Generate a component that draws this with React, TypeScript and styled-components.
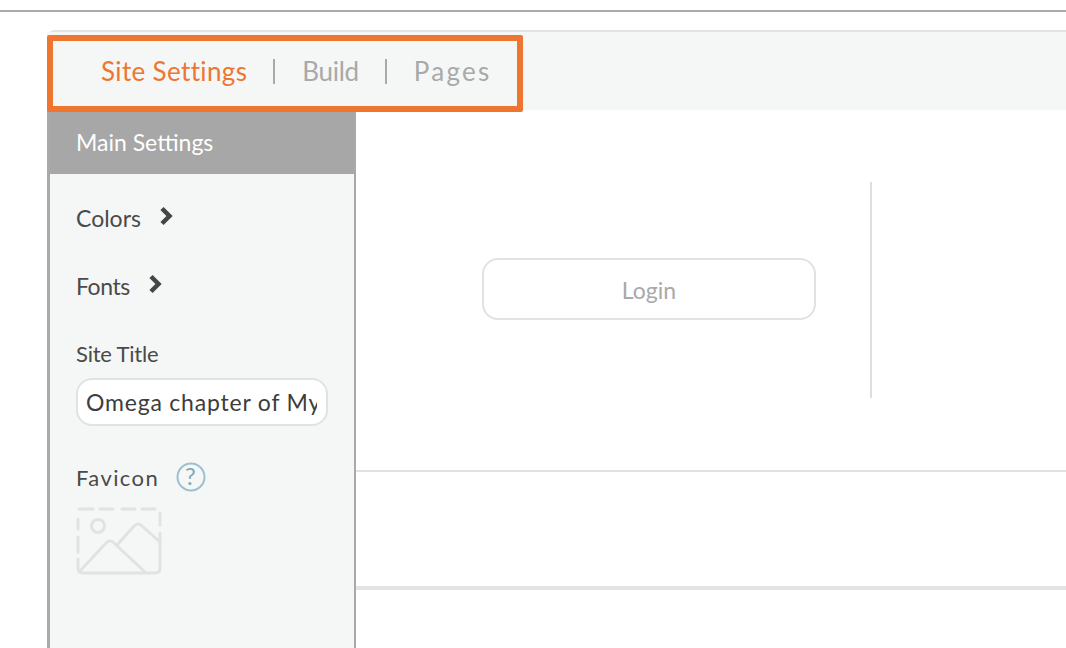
import React from "react";
import styled, { createGlobalStyle } from "styled-components";

const GlobalStyle = createGlobalStyle`
  html, body {
    margin: 0;
    padding: 0;
    height: 648px;
    overflow: hidden;
    background: #fff;
    font-family: "Lato", "Open Sans", sans-serif;
  }
`;

const TopRule = styled.div`
  height: 2px;
  margin-top: 10px;
  background: #a8a9a8;
`;

const Frame = styled.div`
  margin: 18px 0 0 47px;
  border-top: 2px solid #dfe3e2;
  border-top-left-radius: 8px;
`;

const Header = styled.header`
  position: relative;
  height: 78px;
  background: #f5f7f6;
`;

const Highlight = styled.div`
  position: absolute;
  left: 0;
  top: 3px;
  width: 476px;
  height: 77px;
  box-sizing: border-box;
  border: 6px solid #ee7631;
  border-radius: 2px;
`;

const Tabs = styled.nav`
  display: flex;
  align-items: center;
  height: 78px;
  padding: 0 0 0 54px;
  font-size: 26px;
  color: #a8a9a8;
`;

const Tab = styled.span<{ $active?: boolean; $track: number }>`
  color: ${(p) => (p.$active ? "#ee7631" : "#a8a9a8")};
  letter-spacing: ${(p) => p.$track}px;
`;

const Sep = styled.span`
  width: 2px;
  height: 25px;
  margin: 0 27px 0 26px;
  background: #a8a9a8;
`;

const Body = styled.div`
  display: flex;
  height: 540px;
`;

const Sidebar = styled.aside`
  flex: none;
  width: 309px;
  box-sizing: border-box;
  background: #f5f7f6;
  border-left: 3px solid #a8a9a8;
  border-right: 2px solid #a8a9a8;
`;

const SideTitle = styled.div`
  display: flex;
  align-items: center;
  height: 60px;
  margin-top: 2px;
  padding: 0 0 2px 26px;
  background: #a6a7a6;
  color: #fff;
  font-size: 23px;
`;

const SideBody = styled.div`
  padding: 0 0 0 26px;
`;

const MenuRow = styled.div<{ $top: number; $track: number }>`
  display: flex;
  align-items: center;
  gap: 18px;
  height: 30px;
  margin-top: ${(p) => p.$top}px;
  color: #4a4a4a;
  font-size: 23px;
  letter-spacing: ${(p) => p.$track}px;
`;

const Chevron = styled.svg`
  width: 14px;
  height: 20px;
  margin-top: -5px;
`;

const Label = styled.div<{ $top: number; $track: number }>`
  display: flex;
  align-items: center;
  gap: 17px;
  height: 28px;
  margin-top: ${(p) => p.$top}px;
  color: #4a4a4a;
  font-size: 22px;
  letter-spacing: ${(p) => p.$track}px;
`;

const TitleInput = styled.input`
  display: block;
  width: 252px;
  height: 48px;
  margin-top: 11px;
  padding: 0 9px 0 8px;
  box-sizing: border-box;
  background: #fff;
  border: 2px solid #dfe3e2;
  border-radius: 16px;
  outline: none;
  color: #3d3d3d;
  font-family: "Lato", sans-serif;
  font-size: 23px;
  letter-spacing: 0.8px;
`;

const HelpIcon = styled.svg`
  width: 30px;
  height: 30px;
`;

const PlaceholderIcon = styled.svg`
  display: block;
  width: 88px;
  height: 70px;
  margin-top: 16px;
`;

const Main = styled.main`
  flex: 1;
`;

const Hero = styled.section`
  display: flex;
  height: 360px;
  border-bottom: 2px solid #e0e2e1;
`;

const LoginSlot = styled.div`
  width: 514px;
  padding: 148px 0 0 126px;
  box-sizing: border-box;
`;

const LoginButton = styled.button`
  display: block;
  width: 334px;
  height: 62px;
  padding: 2px 0 0;
  background: #fff;
  border: 2px solid #dfe3e2;
  border-radius: 16px;
  color: #a8a9a8;
  font-family: "Lato", sans-serif;
  font-size: 23px;
`;

const VDivider = styled.div`
  width: 2px;
  height: 216px;
  margin-top: 72px;
  background: #dcdfde;
`;

const Band = styled.section`
  height: 114px;
  border-bottom: 4px solid #e3e5e4;
`;

const chevronPath = "M3 2.5 10.5 10 3 17.5";

export default function App() {
  return (
    <>
      <GlobalStyle />
      <TopRule />
      <Frame>
        <Header>
          <Tabs>
            <Tab $active $track={0.35}>Site Settings</Tab>
            <Sep />
            <Tab $track={-0.3}>Build</Tab>
            <Sep />
            <Tab $track={2.3}>Pages</Tab>
          </Tabs>
          <Highlight />
        </Header>
        <Body>
          <Sidebar>
            <SideTitle>Main Settings</SideTitle>
            <SideBody>
              <MenuRow $top={29} $track={0}>
                Colors
                <Chevron viewBox="0 0 14 20">
                  <path d={chevronPath} fill="none" stroke="#454545" strokeWidth="4.5" />
                </Chevron>
              </MenuRow>
              <MenuRow $top={38} $track={-0.4}>
                Fonts
                <Chevron viewBox="0 0 14 20">
                  <path d={chevronPath} fill="none" stroke="#454545" strokeWidth="4.5" />
                </Chevron>
              </MenuRow>
              <Label $top={38} $track={-0.2}>Site Title</Label>
              <TitleInput readOnly value="Omega chapter of My" />
              <Label $top={37} $track={1.4}>
                Favicon
                <HelpIcon viewBox="0 0 30 30">
                  <circle cx="15" cy="15" r="13.5" fill="none" stroke="#9dc0cd" strokeWidth="2" />
                  <text x="15" y="23" textAnchor="middle" fontFamily="Lato, sans-serif" fontSize="24" fill="#7fa9ba">?</text>
                </HelpIcon>
              </Label>
              <PlaceholderIcon viewBox="0 0 88 70">
                <g fill="none" stroke="#dfe3e2" strokeWidth="3" strokeLinecap="round" strokeLinejoin="round">
                  <path d="M3 2H17M24 2H37M46 2H59M66 2H79" />
                  <path d="M84 6V18M84 26V61Q84 66 79 66H7Q2 66 2 61V52" />
                  <path d="M2 12V22M2 30V45" />
                  <circle cx="22" cy="19" r="6.5" />
                  <path d="M4 64 30 36Q34 32 38 36L69 65" />
                  <path d="M42 37 58 19Q62 15 66 19L84 35" />
                </g>
              </PlaceholderIcon>
            </SideBody>
          </Sidebar>
          <Main>
            <Hero>
              <LoginSlot>
                <LoginButton>Login</LoginButton>
              </LoginSlot>
              <VDivider />
            </Hero>
            <Band />
          </Main>
        </Body>
      </Frame>
    </>
  );
}
